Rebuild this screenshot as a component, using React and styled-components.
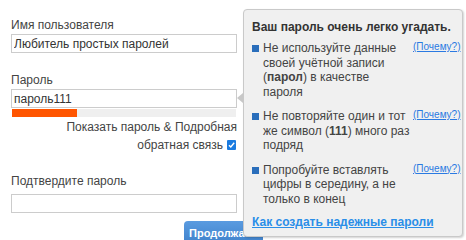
import { createGlobalStyle } from 'styled-components';
import styled from 'styled-components';

const GlobalStyle = createGlobalStyle`
  html, body {
    margin: 0;
    padding: 0;
    background: #fff;
  }
  body {
    font-family: "Liberation Sans", Arial, sans-serif;
    font-size: 12px;
    color: #444;
  }
`;

const Page = styled.div`
  position: relative;
  width: 466px;
  height: 240px;
  overflow: hidden;
`;

const Form = styled.form`
  width: 226px;
  margin-left: 11px;
  padding-top: 18px;
  display: flex;
  flex-direction: column;
`;

const Field = styled.div`
  display: flex;
  flex-direction: column;
  margin-top: ${(p) => p.$top || 0}px;
  margin-bottom: ${(p) => p.$gap || 0}px;
`;

const Label = styled.label`
  line-height: 15px;
  margin-bottom: ${(p) => p.$space || 1}px;
`;

const Input = styled.input`
  box-sizing: border-box;
  width: 226px;
  height: 19px;
  margin: 0;
  padding: 0 2px;
  border: 1px solid #ccc;
  font-family: inherit;
  font-size: 12px;
  color: #333;
  outline: none;
`;

const Meter = styled.div`
  height: 8px;
  margin: 1px 1px 0;
  background: #efefef;
`;

const MeterFill = styled.div`
  height: 100%;
  background: #ff5500;
`;

const Options = styled.div`
  text-align: right;
  line-height: 18px;
  margin-top: 1px;
  color: #444;
`;

const Check = styled.span`
  display: inline-block;
  width: 9px;
  height: 10px;
  margin-left: 4px;
  margin-right: 1px;
  vertical-align: -1px;
  border-radius: 1px;
  background: #1a7be0;
  svg {
    display: block;
  }
`;

const Actions = styled.div`
  display: flex;
  padding-left: 173px;
  margin-top: 8px;
`;

const Button = styled.button`
  font-family: inherit;
  font-size: 11px;
  font-weight: bold;
  line-height: 14px;
  color: #fff;
  border: none;
  border-radius: 4px 4px 0 0;
  padding: 5px 6px 8px 5px;
  background: linear-gradient(#5a9be0, #3a7dc8);
  white-space: nowrap;
`;

const Popover = styled.div`
  position: absolute;
  left: 243px;
  top: 9px;
  width: 220px;
  height: 228px;
  box-sizing: border-box;
  padding: 10px 5px 0 8px;
  background: #f0f0f0;
  border: 1px solid #c9c9c9;
  border-radius: 4px;
  box-shadow: 1px 1px 2px rgba(0, 0, 0, 0.18);
  color: #444;
`;

const Arrow = styled.span`
  position: absolute;
  left: -7px;
  top: 83px;
  width: 0;
  height: 0;
  border-top: 5px solid transparent;
  border-bottom: 5px solid transparent;
  border-right: 6px solid #c8c8c8;
`;

const Title = styled.div`
  font-weight: bold;
  color: #333;
  line-height: 15px;
  white-space: nowrap;
  margin-bottom: 6px;
`;

const Tips = styled.ul`
  list-style: none;
  margin: 0;
  padding: 0;
`;

const Tip = styled.li`
  display: grid;
  grid-template-columns: 11px 150px 1fr;
  align-items: start;
  line-height: 14.5px;
  margin-bottom: 10px;
`;

const TipText = styled.span`
  white-space: nowrap;
`;

const Bullet = styled.span`
  width: 7px;
  height: 7px;
  margin-top: 4px;
  background: #2a6ebb;
`;

const Why = styled.a`
  justify-self: end;
  margin-right: 2px;
  font-size: 10px;
  line-height: 12px;
  color: #2a7ae2;
  text-decoration: underline;
`;

const HelpLink = styled.a`
  display: block;
  margin-top: -1px;
  font-weight: bold;
  line-height: 15px;
  color: #2a8ee8;
  text-decoration: underline;
`;

const tips = [
  [
    'Не используйте данные',
    'своей учётной записи',
    <>(<b>парол</b>) в качестве</>,
    'пароля',
  ],
  [
    'Не повторяйте один и тот',
    <>же символ (<b>111</b>) много раз</>,
    'подряд',
  ],
  ['Попробуйте вставлять', 'цифры в середину, а не', 'только в конец'],
];

export default function App() {
  return (
    <Page>
      <GlobalStyle />
      <Form>
        <Field $gap={20}>
          <Label>Имя пользователя</Label>
          <Input defaultValue="Любитель простых паролей" />
        </Field>
        <Field>
          <Label>Пароль</Label>
          <Input defaultValue="пароль111" />
          <Meter>
            <MeterFill style={{ width: '29%' }} />
          </Meter>
        </Field>
        <Options>
          Показать пароль &amp; Подробная
          <br />
          обратная связь
          <Check>
            <svg width="9" height="10" viewBox="0 0 9 10">
              <path d="M2 5.2 L3.8 7 L7.2 2.8" fill="none" stroke="#fff" strokeWidth="1.4" />
            </svg>
          </Check>
        </Options>
        <Field $top={20}>
          <Label $space={5}>Подтвердите пароль</Label>
          <Input />
        </Field>
        <Actions>
          <Button type="button">Продолжать</Button>
        </Actions>
      </Form>
      <Popover>
        <Arrow />
        <Title>Ваш пароль очень легко угадать.</Title>
        <Tips>
          {tips.map((lines, i) => (
            <Tip key={i}>
              <Bullet />
              <TipText>
                {lines.map((line, j) => (
                  <span key={j}>
                    {j > 0 && <br />}
                    {line}
                  </span>
                ))}
              </TipText>
              <Why href="#">(Почему?)</Why>
            </Tip>
          ))}
        </Tips>
        <HelpLink href="#">Как создать надежные пароли</HelpLink>
      </Popover>
    </Page>
  );
}
